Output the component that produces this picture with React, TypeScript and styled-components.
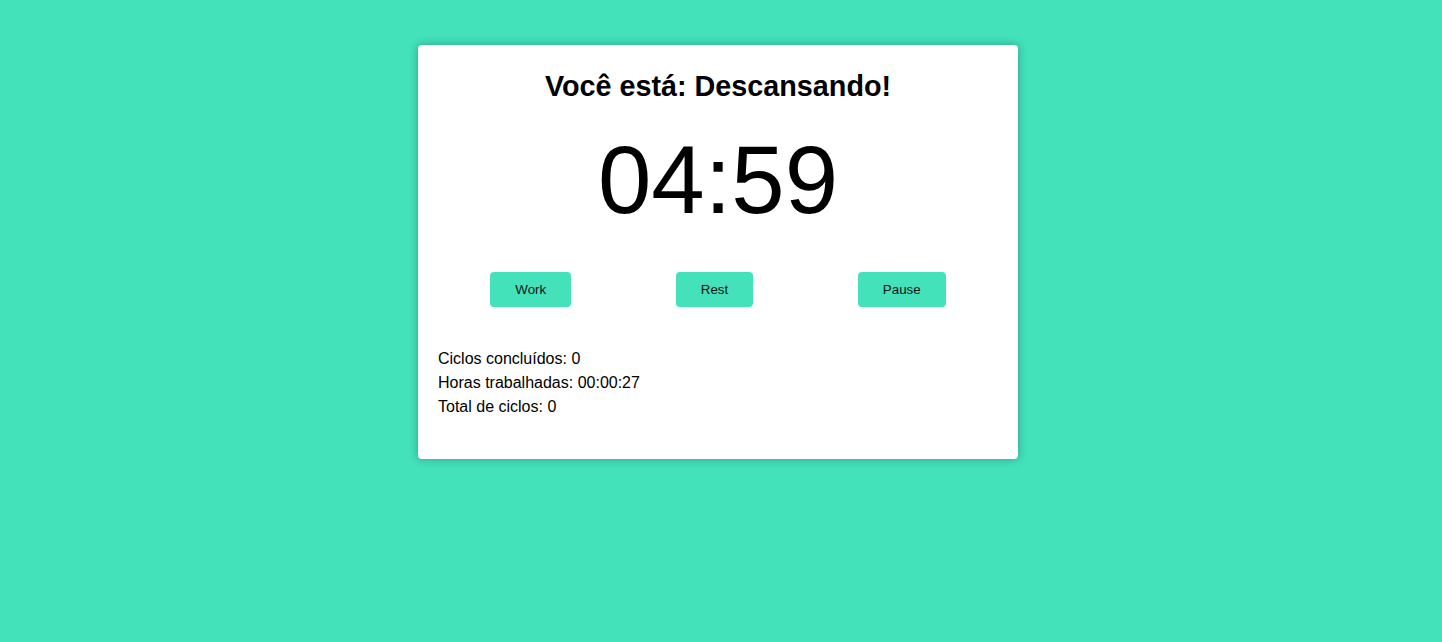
import React from "react";
import styled, { createGlobalStyle } from "styled-components";

const GlobalStyle = createGlobalStyle`
  html, body {
    margin: 0;
    padding: 0;
    background: #43e2bb;
    font-family: "Liberation Sans", Arial, sans-serif;
  }
`;

const Page = styled.div`
  min-height: 642px;
  display: flex;
  justify-content: center;
  align-items: flex-start;
  padding: 45px 6px 0 0;
  box-sizing: border-box;
`;

const Card = styled.div`
  width: 600px;
  box-sizing: border-box;
  background: #ffffff;
  border-radius: 4px;
  box-shadow: 0 0 10px rgba(0, 0, 0, 0.3);
  padding: 25px 20px 40px;
  display: flex;
  flex-direction: column;
`;

const Title = styled.h2`
  margin: 0;
  font-size: 28.75px;
  line-height: 32px;
  font-weight: 700;
  text-align: center;
  color: #000;
`;

const Timer = styled.div`
  margin-top: 30px;
  font-size: 96px;
  line-height: 96px;
  text-align: center;
  color: #000;
`;

const Controls = styled.div`
  margin-top: 44px;
  display: flex;
  justify-content: space-around;
`;

const Button = styled.button`
  font-family: "Liberation Sans", Arial, sans-serif;
  font-size: 13.33px;
  height: 35px;
  padding: 0 25px;
  border: none;
  border-radius: 4px;
  background: #43e2bb;
  color: #111;
  cursor: pointer;
`;

const Details = styled.div`
  margin-top: 40px;
  display: flex;
  flex-direction: column;
`;

const Line = styled.p`
  margin: 0;
  font-size: 16px;
  line-height: 24px;
  color: #000;
`;

export default function App() {
  return (
    <>
      <GlobalStyle />
      <Page>
        <Card>
          <Title>Você está: Descansando!</Title>
          <Timer>04:59</Timer>
          <Controls>
            <Button>Work</Button>
            <Button>Rest</Button>
            <Button>Pause</Button>
          </Controls>
          <Details>
            <Line>Ciclos concluídos: 0</Line>
            <Line>Horas trabalhadas: 00:00:27</Line>
            <Line>Total de ciclos: 0</Line>
          </Details>
        </Card>
      </Page>
    </>
  );
}
